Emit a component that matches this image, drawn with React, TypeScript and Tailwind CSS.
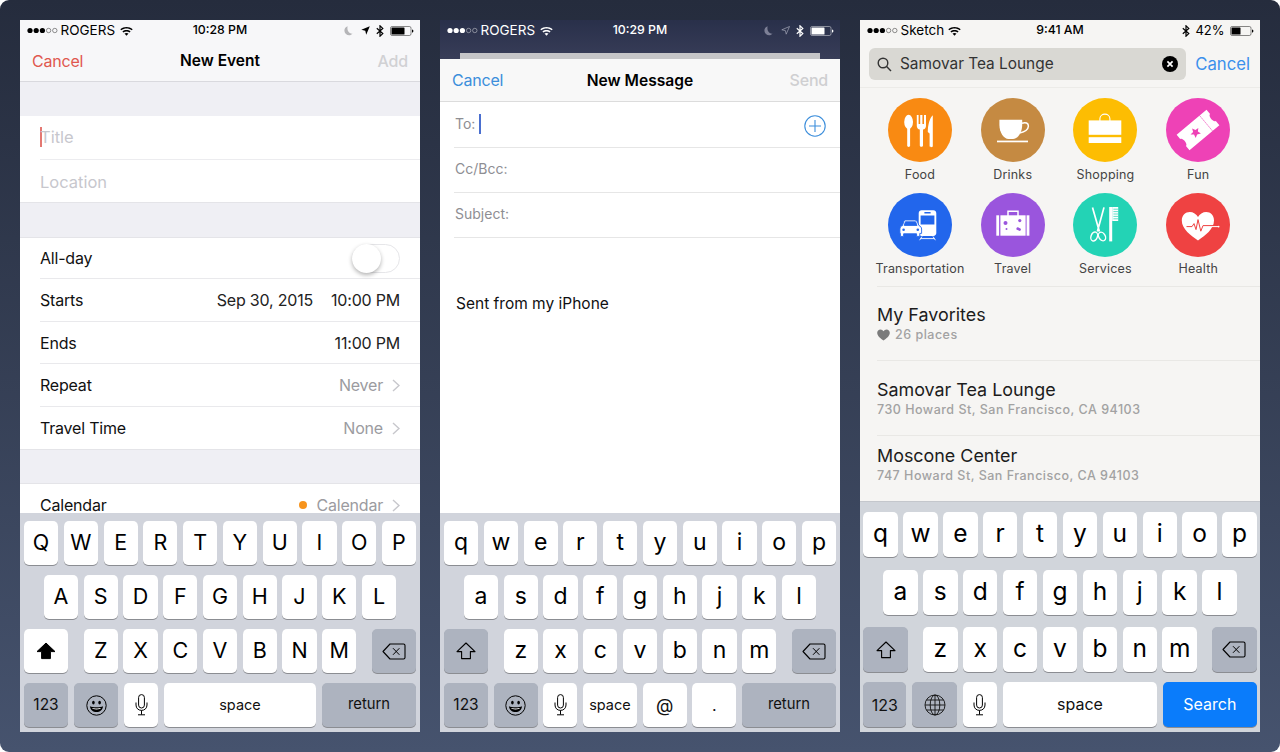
import React from "react";

const Dots = ({ color }: { color: string }) => (
  <svg width="32" height="7" viewBox="0 0 32 7" className="shrink-0">
    {[0, 1, 2].map((i) => (
      <circle key={i} cx={3 + i * 6.2} cy="3.5" r="2.6" fill={color} />
    ))}
    {[3, 4].map((i) => (
      <circle key={i} cx={3 + i * 6.2} cy="3.5" r="2.2" fill="none" stroke={color} strokeWidth="0.6" opacity="0.7" />
    ))}
  </svg>
);

const Wifi = ({ color }: { color: string }) => (
  <svg width="13" height="10" viewBox="0 0 13 10" className="shrink-0">
    <path d="M0.3 3.2C3.8 0.1 9.2 0.1 12.7 3.2L11.7 4.3C8.7 1.8 4.3 1.8 1.3 4.3Z" fill={color} />
    <path d="M2.4 5.4C4.7 3.5 8.3 3.5 10.6 5.4L9.6 6.5C7.8 5.1 5.2 5.1 3.4 6.5Z" fill={color} />
    <path d="M4.5 7.6C5.6 6.7 7.4 6.7 8.5 7.6L6.5 9.8Z" fill={color} />
  </svg>
);

const Moon = ({ color }: { color: string }) => (
  <svg width="9" height="10" viewBox="0 0 9 10" className="shrink-0">
    <path d="M3.6 0.3C1.5 1 0.2 2.8 0.4 5C0.7 7.7 3.2 9.6 5.9 9.2C7 9 8 8.5 8.6 7.6C5.4 8 2.6 4.8 3.6 0.3Z" fill={color} />
  </svg>
);

const Bluetooth = ({ color }: { color: string }) => (
  <svg width="8" height="12" viewBox="0 0 8 12" className="shrink-0">
    <path d="M0.8 3.2L6.8 8.6L4 11.2V0.8L6.8 3.4L0.8 8.8" fill="none" stroke={color} strokeWidth="1.2" />
  </svg>
);

const Battery = ({ color, fill }: { color: string; fill: number }) => (
  <svg width="24" height="10" viewBox="0 0 24 10" className="shrink-0">
    <rect x="0.5" y="0.5" width="20.5" height="9" rx="1.6" fill="none" stroke={color} strokeWidth="0.7" opacity="0.65" />
    <rect x="1.5" y="1.5" width={fill} height="7" rx="0.6" fill={color} />
    <path d="M22 3.4C23 3.6 23.4 4.2 23.4 5C23.4 5.8 23 6.4 22 6.6Z" fill={color} />
  </svg>
);

const Shift = ({ filled }: { filled?: boolean }) => (
  <svg width="20" height="18" viewBox="0 0 20 18">
    <path
      d="M10 1L19 9.6H14.4V16.6H5.6V9.6H1Z"
      fill={filled ? "#000" : "none"}
      stroke="#000"
      strokeWidth={filled ? 1 : 1.1}
      strokeLinejoin="round"
    />
  </svg>
);

const Del = () => (
  <svg width="24" height="17" viewBox="0 0 24 17">
    <path d="M8 1H21.5C22.4 1 23 1.6 23 2.5V14.5C23 15.4 22.4 16 21.5 16H8L1 8.5Z" fill="none" stroke="#000" strokeWidth="1.1" strokeLinejoin="round" />
    <path d="M11 5.2L17.4 11.8M17.4 5.2L11 11.8" stroke="#000" strokeWidth="1" />
  </svg>
);

const Emoji = () => (
  <svg width="21" height="21" viewBox="0 0 21 21">
    <circle cx="10.5" cy="10.5" r="9.7" fill="none" stroke="#000" strokeWidth="1" />
    <ellipse cx="7.4" cy="7.6" rx="1.3" ry="1.9" fill="#000" />
    <ellipse cx="13.6" cy="7.6" rx="1.3" ry="1.9" fill="#000" />
    <path d="M3.9 11.2C6.5 12.5 14.5 12.5 17.1 11.2C16.6 14.9 14 17 10.5 17C7 17 4.4 14.9 3.9 11.2Z" fill="#000" />
    <path d="M6 13C8 13.6 13 13.6 15 13C14.6 14 13 14.4 10.5 14.4C8 14.4 6.4 14 6 13Z" fill="#fff" />
  </svg>
);

const Mic = () => (
  <svg width="13" height="22" viewBox="0 0 13 22">
    <rect x="3.6" y="0.6" width="5.8" height="13.4" rx="2.9" fill="none" stroke="#000" strokeWidth="1" />
    <path d="M1 8.5V11C1 14.2 3.3 16.4 6.5 16.4C9.7 16.4 12 14.2 12 11V8.5M6.5 16.4V20.6M3 20.8H10" fill="none" stroke="#000" strokeWidth="1" />
  </svg>
);

const Globe = () => (
  <svg width="22" height="22" viewBox="0 0 22 22" fill="none" stroke="#111" strokeWidth="0.9">
    <circle cx="11" cy="11" r="10" />
    <ellipse cx="11" cy="11" rx="4.8" ry="10" />
    <path d="M11 1V21M1 11H21M2.4 6H19.6M2.4 16H19.6" />
  </svg>
);

const Key = ({
  children,
  className,
}: {
  children: React.ReactNode;
  className: string;
}) => (
  <div className={`flex items-center justify-center rounded-[5px] shadow-[0_1px_0_#8b8d92] ${className}`}>{children}</div>
);

const Letters = ({ keys, cls }: { keys: string; cls: string }) => (
  <>
    {keys.split("").map((k) => (
      <Key key={k} className={`bg-white text-black ${cls}`}>
        {k}
      </Key>
    ))}
  </>
);

const CAT = "bg-[#adb3bf]";

const Keyboard = ({
  rows,
  shift,
  bottom,
  size,
  upper,
}: {
  rows: string[];
  shift: React.ReactNode;
  bottom: React.ReactNode;
  size: "md" | "lg";
  upper?: boolean;
}) => {
  const lg = size === "lg";
  const letter = lg ? "text-[24.5px] leading-none pb-[2px]" : upper ? "text-[21.5px] font-normal leading-none" : "text-[23px] leading-none pb-[2px]";
  const keyW = lg ? "flex-1 h-[45px]" : "flex-1 h-[44px]";
  const fixedW = lg ? "w-[34.4px] h-[45px]" : "w-[34.16px] h-[44px]";
  const rowCls = lg ? "flex gap-[5.5px] px-[3.4px]" : "flex gap-[5.6px] px-1";
  return (
    <div
      className={
        lg
          ? "flex flex-col shrink-0 h-[231px] bg-[#d1d5db] border-t border-[#c4c7cc] pt-[10px] gap-[12.5px]"
          : "flex flex-col shrink-0 h-[219px] bg-[#d1d4dc] pt-[8px] gap-[10px]"
      }
    >
      <div className={rowCls}>
        <Letters keys={rows[0]} cls={`${keyW} ${letter}`} />
      </div>
      <div className={`${rowCls} justify-center`}>
        <Letters keys={rows[1]} cls={`${fixedW} ${letter}`} />
      </div>
      <div className={`flex ${lg ? "px-[3.4px] h-[45px]" : "px-1 h-[44px]"}`}>
        {shift}
        <div className={`flex flex-1 justify-center ${lg ? "gap-[5.5px]" : "gap-[5.6px]"}`}>
          <Letters keys={rows[2]} cls={`${fixedW} ${letter}`} />
        </div>
        <Key className={`${CAT} ${lg ? "w-[44.6px]" : "w-[44px]"}`}>
          <Del />
        </Key>
      </div>
      {bottom}
    </div>
  );
};

const Status = ({
  color,
  carrier,
  time,
  right,
  wifiGap,
}: {
  color: string;
  carrier: string;
  time: string;
  right: React.ReactNode;
  wifiGap: string;
}) => (
  <div className="grid grid-cols-3 items-center h-[20px] shrink-0 pt-[1px] px-[6.5px] text-[13.5px] leading-none" style={{ color }}>
    <div className="flex items-center">
      <Dots color={color} />
      <span className="ml-[2px]">{carrier}</span>
      <span className={wifiGap}>
        <Wifi color={color} />
      </span>
    </div>
    <div className="text-center font-medium text-[12.3px]">{time}</div>
    <div className="flex items-center justify-end">{right}</div>
  </div>
);

const Chevron = () => (
  <svg width="8" height="13" viewBox="0 0 8 13" className="ml-[9px]">
    <path d="M1 1L7 6.5L1 12" fill="none" stroke="#c7c7cc" strokeWidth="1.4" />
  </svg>
);

const EventRow = ({
  label,
  children,
  h,
  last,
}: {
  label: string;
  children?: React.ReactNode;
  h: string;
  last?: boolean;
}) => (
  <div className={`flex items-center justify-between ml-5 pr-5 ${h} ${last ? "" : "border-b border-[#e9e9ec]"}`}>
    <span className="text-[16px] tracking-[-0.2px] text-[#111]">{label}</span>
    <div className="flex items-center text-[16px] tracking-[-0.2px]">{children}</div>
  </div>
);

const EventScreen = () => (
  <div className="flex flex-col w-[400px] h-[712px] overflow-hidden bg-[#efeff4]">
    <div className="bg-[#f7f7f9] border-b border-[#d9d9de] shrink-0">
      <Status
        color="#000"
        carrier="ROGERS"
        time="10:28 PM"
        wifiGap="ml-[5px]"
        right={
          <div className="flex items-center gap-[6px]">
            <Moon color="#b5b5b8" />
            <svg width="9" height="9" viewBox="0 0 9 9" className="ml-[2px]">
              <path d="M8.8 0.2L0.3 3.8L4.3 4.7L5.2 8.8Z" fill="#000" />
            </svg>
            <Bluetooth color="#000" />
            <Battery color="#000" fill={13} />
          </div>
        }
      />
      <div className="grid grid-cols-3 items-center h-[41px] pt-[1px] px-3 text-[16px] tracking-[-0.2px]">
        <span className="text-[#e0574f]">Cancel</span>
        <span className="text-center font-semibold text-[15.5px] tracking-normal text-black">New Event</span>
        <span className="text-right font-medium text-[#d1d1d4]">Add</span>
      </div>
    </div>
    <div className="h-[34px] shrink-0" />
    <div className="bg-white shrink-0 border-b border-[#e4e4e8]">
      <div className="flex items-center ml-5 h-[43.5px] border-b border-[#ececef] text-[16.5px] text-[#c7c7cd]">
        <span className="w-[1.5px] h-[20px] bg-[#e47872] -mr-[1.5px]" />
        <span>Title</span>
      </div>
      <div className="flex items-center ml-5 h-[42.5px] pt-[3px] text-[16.5px] text-[#c7c7cd]">Location</div>
    </div>
    <div className="h-[34px] shrink-0" />
    <div className="bg-white shrink-0 border-t border-[#e4e4e8]">
      <EventRow label="All-day" h="h-[41px]">
        <div className="relative w-[48px] h-[29px] rounded-full border border-[#e6e6e9] bg-white">
          <div className="absolute -left-px -top-px w-[29px] h-[29px] rounded-full bg-white shadow-[0_2px_4px_rgba(0,0,0,0.3)]" />
        </div>
      </EventRow>
      <EventRow label="Starts" h="h-[42.5px]">
        <span className="text-[#222]">Sep 30, 2015</span>
        <span className="ml-[18px] text-[#222]">10:00 PM</span>
      </EventRow>
      <EventRow label="Ends" h="h-[42.5px] pt-[1px]">
        <span className="text-[#222]">11:00 PM</span>
      </EventRow>
      <EventRow label="Repeat" h="h-[42.5px] pt-[1px]">
        <span className="text-[#9b9ba0]">Never</span>
        <Chevron />
      </EventRow>
      <EventRow label="Travel Time" h="h-[42.5px] pt-[1px]" last>
        <span className="text-[#9b9ba0]">None</span>
        <Chevron />
      </EventRow>
    </div>
    <div className="h-[34px] shrink-0 border-t border-[#e4e4e8]" />
    <div className="flex-1 min-h-0 bg-white border-t border-[#e4e4e8]">
      <EventRow label="Calendar" h="h-[42px]" last>
        <span className="w-[8px] h-[8px] rounded-full bg-[#f7941d] mr-[9px]" />
        <span className="text-[#9b9ba0]">Calendar</span>
        <Chevron />
      </EventRow>
    </div>
    <Keyboard
      size="md"
      upper
      rows={["QWERTYUIOP", "ASDFGHJKL", "ZXCVBNM"]}
      shift={
        <Key className="bg-white w-[44px]">
          <Shift filled />
        </Key>
      }
      bottom={
        <div className="flex gap-[6px] px-1 h-[44px] text-[15.5px] text-[#111]">
          <Key className={`${CAT} w-[44px]`}>123</Key>
          <Key className={`${CAT} w-[44px]`}>
            <Emoji />
          </Key>
          <Key className="bg-white w-[34px]">
            <Mic />
          </Key>
          <Key className="bg-white flex-1 text-[14.5px] pb-[1px]">space</Key>
          <Key className={`${CAT} w-[94px] text-[14.8px] pb-[1px]`}>return</Key>
        </div>
      }
    />
  </div>
);

const MailRow = ({ label, h, children }: { label: string; h: string; children?: React.ReactNode }) => (
  <div className={`flex items-center justify-between ml-[14px] pl-[1px] pr-[14px] border-b border-[#e6e6e6] text-[14px] text-[#8e8e93] shrink-0 ${h}`}>
    {children ?? <span>{label}</span>}
  </div>
);

const MailScreen = () => (
  <div className="flex flex-col w-[400px] h-[712px] overflow-hidden bg-white">
    <div className="flex flex-col h-[39px] shrink-0 bg-gradient-to-b from-[#29304a] to-[#383d58]">
      <Status
        color="#fff"
        carrier="ROGERS"
        time="10:29 PM"
        wifiGap="ml-[5px]"
        right={
          <div className="flex items-center gap-[6px]">
            <Moon color="#7d8096" />
            <svg width="9" height="9" viewBox="0 0 9 9" className="ml-[2px]">
              <path d="M8.5 0.5L0.8 3.8L4.4 4.6L5.2 8.2Z" fill="none" stroke="#a5a7b8" strokeWidth="0.7" />
            </svg>
            <Bluetooth color="#fff" />
            <Battery color="#fff" fill={13} />
          </div>
        }
      />
      <div className="flex-1" />
      <div className="h-[6px] mx-5 bg-[#c5c5c7] shrink-0" />
    </div>
    <div className="grid grid-cols-3 items-center h-[43px] px-3 text-[16px] tracking-[-0.2px] bg-[#f8f8f8] border-b border-[#dcdcdc] shrink-0">
      <span className="text-[#3c8edb]">Cancel</span>
      <span className="text-center font-semibold text-[15.6px] tracking-normal whitespace-nowrap text-black pt-[1px]">New Message</span>
      <span className="text-right font-medium text-[#cfcfd1]">Send</span>
    </div>
    <MailRow label="To:" h="h-[46px]">
      <div className="flex items-center pb-[2px]">
        <span>To:</span>
        <span className="ml-[4px] w-[2px] h-[20px] bg-[#4a6fcf]" />
      </div>
      <svg width="22" height="22" viewBox="0 0 22 22" fill="none" stroke="#3c8edb" strokeWidth="1.1" className="mt-[2px]">
        <circle cx="11" cy="11" r="10.2" />
        <path d="M11 5V17M5 11H17" />
      </svg>
    </MailRow>
    <MailRow label="Cc/Bcc:" h="h-[45px] pb-[3px]" />
    <MailRow label="Subject:" h="h-[45px] pb-[3px]" />
    <div className="flex-1 min-h-0 pl-4 pt-[54px] text-[15.5px] text-[#111]">Sent from my iPhone</div>
    <Keyboard
      size="md"
      rows={["qwertyuiop", "asdfghjkl", "zxcvbnm"]}
      shift={
        <Key className={`${CAT} w-[44px]`}>
          <Shift />
        </Key>
      }
      bottom={
        <div className="flex gap-[5.67px] px-1 h-[44px] text-[15.5px] text-[#111]">
          <Key className={`${CAT} w-[44px]`}>123</Key>
          <Key className={`${CAT} w-[44px]`}>
            <Emoji />
          </Key>
          <Key className="bg-white w-[34px]">
            <Mic />
          </Key>
          <Key className="bg-white w-[54px] text-[14.5px] pb-[1px]">space</Key>
          <Key className="bg-white w-[44px] text-[18px]">@</Key>
          <Key className="bg-white w-[44px] text-[16px]">.</Key>
          <Key className={`${CAT} flex-1 text-[14.8px] pb-[1px]`}>return</Key>
        </div>
      }
    />
  </div>
);

const FoodIcon = () => (
  <svg viewBox="0 0 64 64" className="w-16 h-16" fill="#fff">
    <ellipse cx="20.6" cy="24" rx="4.4" ry="7.2" />
    <rect x="19.2" y="28" width="2.9" height="21" rx="1.4" />
    <path d="M28.8 17H30.6V26H32.2V17H34.4V26H36V17H38V28C38 30 36.6 31.2 35 31.6V47.4C35 49.2 31.8 49.2 31.8 47.4V31.6C30.2 31.2 28.8 30 28.8 28Z" />
    <path d="M44.8 17.2V48C44.8 49.6 41.6 49.6 41.6 48V35.4L39.8 34C39.8 27 41.6 20 44.8 17.2Z" />
  </svg>
);
const DrinkIcon = () => (
  <svg viewBox="0 0 64 64" className="w-16 h-16">
    <path d="M18.4 21.8H41.2V27C41.2 34 37 41 32 41H27.6C22.6 41 18.4 34 18.4 27Z" fill="#fff" />
    <path d="M41 25.2C44.6 23.8 47.6 25.2 47.4 28.2C47.2 31.4 43 34 38.6 35" fill="none" stroke="#fff" strokeWidth="1.5" />
    <rect x="16" y="42.6" width="31" height="1.7" fill="#fff" />
  </svg>
);
const ShopIcon = () => (
  <svg viewBox="0 0 64 64" className="w-16 h-16">
    <path d="M26.9 23V20.8C26.9 14.6 36.9 14.6 36.9 20.8V23" fill="none" stroke="#fff" strokeWidth="1.1" />
    <rect x="15.7" y="22.4" width="32.6" height="14.4" fill="#fff" />
    <rect x="15.7" y="39.2" width="32.6" height="5.8" fill="#fff" />
  </svg>
);
const FunIcon = () => (
  <svg viewBox="0 0 64 64" className="w-16 h-16">
    <g transform="rotate(-40 32 32)">
      <path
        d="M12.5 22H51.5V27.5C48.5 27.5 48.5 36.5 51.5 36.5V42H12.5V36.5C15.5 36.5 15.5 27.5 12.5 27.5Z"
        fill="#fff"
      />
      <path d="M42.5 22V42" stroke="#ee42b6" strokeWidth="0.9" strokeDasharray="1.4 1.2" />
      <path d="M28.5 27L30 30.4L33.6 30.6L31 33L31.9 36.6L28.5 34.8L25.1 36.6L26 33L23.4 30.6L27 30.4Z" fill="#ee42b6" />
    </g>
  </svg>
);
const TransIcon = () => (
  <svg viewBox="0 0 64 64" className="w-16 h-16">
    <path fillRule="evenodd" fill="#fff" d="M33.6 17.3H45.4C47 17.3 48.3 18.6 48.3 20.2V40C48.3 41.6 47 42.9 45.4 42.9H33.6C32 42.9 30.7 41.6 30.7 40V20.2C30.7 18.6 32 17.3 33.6 17.3ZM32.6 22.4V31.4H46.4V22.4ZM36.4 19V20.4H42.6V19Z" />
    <path d="M34 43.5L31.6 47.2M45 43.5L47.4 47.2M32.6 45.6H46.4" stroke="#fff" strokeWidth="0.9" fill="none" />
    <path fillRule="evenodd" fill="#fff" stroke="#2266ec" strokeWidth="0.9" d="M17.5 27H26.5C28 27 29 28 29.6 29.4L31 32.6C32.6 33.2 33.6 34.4 33.6 36V40.4H31.8V43.4H28.6V40.8H15.6V43.4H12.4V40.4H11.9V36C11.9 34.4 13 33.2 14.4 32.6L15.6 29.2C16 28 16.6 27 17.5 27ZM17.4 28.8L16.2 32.4H29L27.6 28.8Z" />
    <circle cx="15.6" cy="36.8" r="1.3" fill="#2266ec" />
    <circle cx="29.8" cy="36.8" r="1.3" fill="#2266ec" />
  </svg>
);
const TravelIcon = () => (
  <svg viewBox="0 0 64 64" className="w-16 h-16">
    <path d="M27 23V18.2H37V23" fill="none" stroke="#fff" strokeWidth="1.5" />
    <rect x="15.3" y="22.3" width="2.8" height="20.4" fill="#fff" />
    <rect x="19.4" y="22.3" width="25.2" height="20.4" fill="#fff" />
    <rect x="45.6" y="22.3" width="2.8" height="20.4" fill="#fff" />
    <circle cx="24.5" cy="30" r="2" fill="#9a55dd" />
    <circle cx="38.8" cy="27.6" r="1.6" fill="#9a55dd" />
    <rect x="35.4" y="34.8" width="4.6" height="2.6" rx="1" transform="rotate(25 37.7 36)" fill="#9a55dd" />
    <circle cx="25.5" cy="36" r="1" fill="#9a55dd" />
  </svg>
);
const ServiceIcon = () => (
  <svg viewBox="0 0 64 64" className="w-16 h-16">
    <g fill="none" stroke="#fff">
      <path d="M19.5 14.4L26.4 38.5M31 14.4L24.4 38.5" strokeWidth="1.7" />
      <ellipse cx="21.2" cy="43.5" rx="3.2" ry="4.6" strokeWidth="1.4" transform="rotate(20 21.2 43.5)" />
      <ellipse cx="29" cy="43.5" rx="3.2" ry="4.6" strokeWidth="1.4" transform="rotate(-30 29 43.5)" />
    </g>
    <rect x="36.2" y="14" width="3" height="34.4" fill="#fff" />
    <rect x="39.2" y="14" width="6" height="14" fill="#fff" />
    <path d="M40.4 16.2H45.2M40.4 18.6H45.2M40.4 21H45.2M40.4 23.4H45.2M40.4 25.8H45.2" stroke="#23d3b5" strokeWidth="0.7" />
  </svg>
);
const HealthIcon = () => (
  <svg viewBox="0 0 64 64" className="w-16 h-16">
    <path d="M32 47.4C25 42.6 15.8 36 15.8 27.4C15.8 22.4 19.4 19 23.8 19C27.2 19 30.4 21 32 24C33.6 21 36.8 19 40.2 19C44.6 19 48 22.4 48 27.4C48 36 39 42.6 32 47.4Z" fill="#fff" />
    <path d="M20.5 33.6H26L28 30.6L30 36.6L32 26.6L34.8 38.2L37 32.6H48" fill="none" stroke="#ef4242" strokeWidth="1" />
    <path d="M46 33.6H52.5" stroke="#fff" strokeWidth="1" />
    <circle cx="52.6" cy="33.6" r="0.9" fill="#fff" />
  </svg>
);

const Category = ({ bg, label, icon }: { bg: string; label: string; icon: React.ReactNode }) => (
  <div className="flex flex-col items-center">
    <div className={`w-16 h-16 rounded-full ${bg}`}>{icon}</div>
    <span className="mt-[3px] h-[20px] flex items-center text-[12.5px] tracking-[0.2px] whitespace-nowrap text-[#444]">{label}</span>
  </div>
);

const Place = ({
  title,
  sub,
  h,
  pt,
  last,
  heart,
}: {
  title: string;
  sub: string;
  h: string;
  pt: string;
  last?: boolean;
  heart?: boolean;
}) => (
  <div className={`ml-[17px] shrink-0 ${h} ${pt} ${last ? "" : "border-b border-[#e9e8e5]"}`}>
    <div className="text-[17.9px] leading-[24px] text-[#1c1c1c]">{title}</div>
    <div className="flex items-center text-[12.5px] leading-[16px] tracking-[0.5px] text-[#a2a2a2] font-medium">
      {heart && (
        <svg width="13" height="12" viewBox="0 0 13 12" className="mr-[5px]">
          <path d="M6.5 11.6C3.8 9.6 0.2 7.2 0.2 3.8C0.2 1.8 1.7 0.4 3.4 0.4C4.8 0.4 5.9 1.2 6.5 2.3C7.1 1.2 8.2 0.4 9.6 0.4C11.3 0.4 12.8 1.8 12.8 3.8C12.8 7.2 9.2 9.6 6.5 11.6Z" fill="#7b7b7b" />
        </svg>
      )}
      {sub}
    </div>
  </div>
);

const MapScreen = () => (
  <div className="flex flex-col w-[400px] h-[712px] overflow-hidden bg-[#f6f5f3]">
    <Status
      color="#000"
      carrier="Sketch"
      time="9:41 AM"
      wifiGap="ml-[4px]"
      right={
        <div className="flex items-center">
          <Bluetooth color="#000" />
          <span className="ml-[5px] text-[13px]">42%</span>
          <span className="ml-[5px]">
            <Battery color="#000" fill={9} />
          </span>
        </div>
      }
    />
    <div className="flex items-center h-[48px] pt-[1px] pl-[9px] pr-[10px] border-b border-[#ecebe8] shrink-0">
      <div className="flex items-center w-[317px] h-[32px] rounded-[6px] bg-[#d9d8d3] px-2">
        <svg width="15" height="15" viewBox="0 0 15 15" fill="none" stroke="#333" strokeWidth="1.4">
          <circle cx="6" cy="6" r="4.8" />
          <path d="M9.6 9.6L14 14" />
        </svg>
        <span className="ml-[8px] flex-1 text-[15.4px] text-[#333]">Samovar Tea Lounge</span>
        <svg width="16" height="16" viewBox="0 0 16 16">
          <circle cx="8" cy="8" r="8" fill="#000" />
          <path d="M5.4 5.4L10.6 10.6M10.6 5.4L5.4 10.6" stroke="#fff" strokeWidth="1.7" />
        </svg>
      </div>
      <span className="ml-auto pt-[2px] text-[16.7px] text-[#3b90ec]">Cancel</span>
    </div>
    <div className="grid grid-cols-4 w-[371px] ml-[13.6px] mt-[10px] gap-y-[7.5px] shrink-0">
      <Category bg="bg-[#f98a12]" label="Food" icon={<FoodIcon />} />
      <Category bg="bg-[#c58a42]" label="Drinks" icon={<DrinkIcon />} />
      <Category bg="bg-[#fdbd02]" label="Shopping" icon={<ShopIcon />} />
      <Category bg="bg-[#ee42b6]" label="Fun" icon={<FunIcon />} />
      <Category bg="bg-[#2266ec]" label="Transportation" icon={<TransIcon />} />
      <Category bg="bg-[#9a55dd]" label="Travel" icon={<TravelIcon />} />
      <Category bg="bg-[#23d3b5]" label="Services" icon={<ServiceIcon />} />
      <Category bg="bg-[#ef4242]" label="Health" icon={<HealthIcon />} />
    </div>
    <div className="ml-[17px] border-b border-[#e9e8e5] mt-[6.5px] shrink-0" />
    <Place title="My Favorites" sub="26 places" h="h-[74px]" pt="pt-[16px]" heart />
    <Place title="Samovar Tea Lounge" sub="730 Howard St, San Francisco, CA 94103" h="h-[75px]" pt="pt-[17px]" />
    <Place title="Moscone Center" sub="747 Howard St, San Francisco, CA 94103" h="h-[64px]" pt="pt-[7.5px]" last />
    <div className="flex-1" />
    <Keyboard
      size="lg"
      rows={["qwertyuiop", "asdfghjkl", "zxcvbnm"]}
      shift={
        <Key className={`${CAT} w-[44.6px]`}>
          <Shift />
        </Key>
      }
      bottom={
        <div className="flex gap-[6px] -mt-[2.5px] px-[3.4px] h-[45px] text-[16px] text-[#111]">
          <Key className={`${CAT} w-[43px]`}>123</Key>
          <Key className={`${CAT} w-[44.6px]`}>
            <Globe />
          </Key>
          <Key className="bg-white w-[34px]">
            <Mic />
          </Key>
          <Key className="bg-white w-[154px] pb-[2px]">space</Key>
          <Key className="bg-[#0a7cfb] flex-1 text-white pb-[2px]">Search</Key>
        </div>
      }
    />
  </div>
);

export default function App() {
  return (
    <div className="bg-white w-[1280px] h-[752px] [font-family:Inter,sans-serif]">
      <div className="flex gap-5 p-5 w-full h-full rounded-[9px] bg-gradient-to-b from-[#252c3d] to-[#46536e]">
        <EventScreen />
        <MailScreen />
        <MapScreen />
      </div>
    </div>
  );
}
